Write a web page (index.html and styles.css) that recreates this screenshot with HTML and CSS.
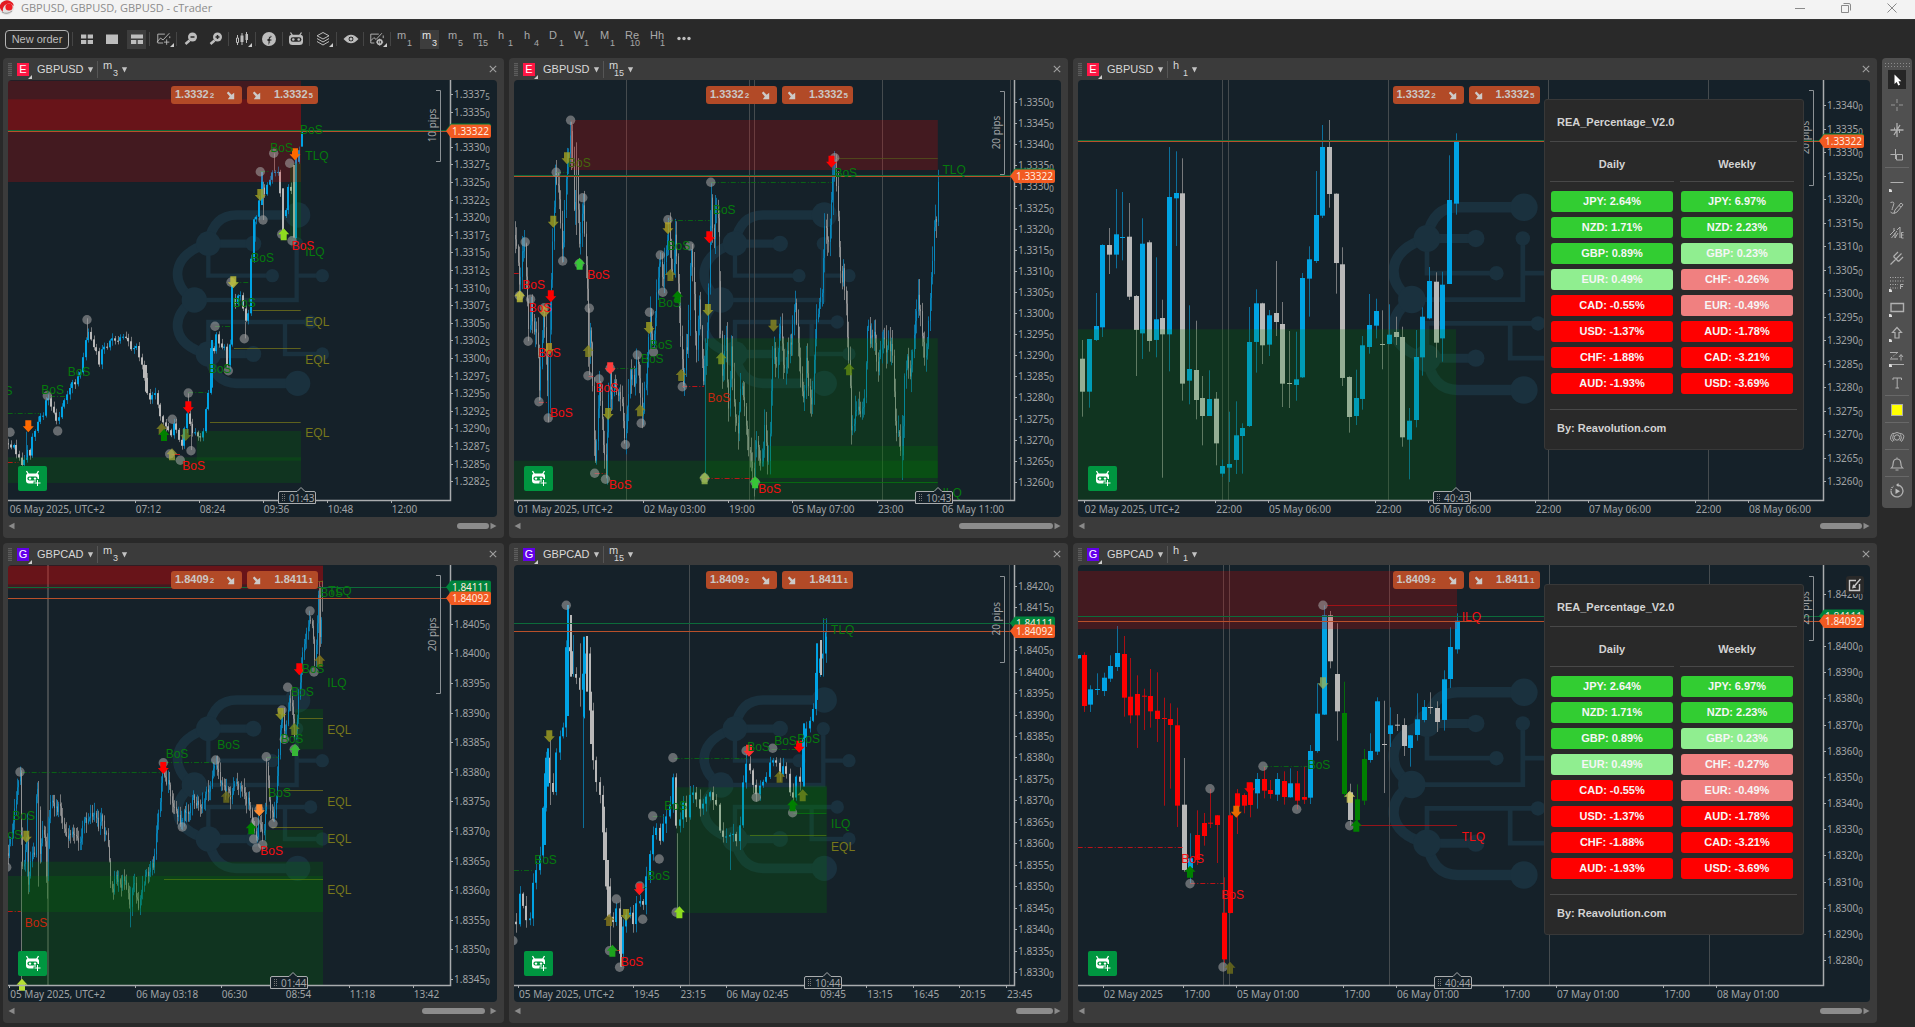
FILE: index.html
```html
<!DOCTYPE html>
<html lang="en">
<head>
<meta charset="utf-8">
<title>GBPUSD, GBPUSD, GBPUSD - cTrader</title>
<link rel="stylesheet" href="styles.css">
</head>
<body>
<svg class="defs" aria-hidden="true">
  <defs>
    <symbol id="i-corner" viewBox="0 0 4 4"><path d="M4 0V4H0Z" fill="#ccc"/></symbol>
    <symbol id="i-down" viewBox="0 0 8 8"><path d="M1 1.500H7L4 7.500Z" fill="#c4c4c4"/></symbol>
    <symbol id="i-close" viewBox="0 0 8 8"><path d="M.8.8 7.2 7.2M7.2.8.8 7.2" stroke="#a0a0a0" stroke-width="1.1" fill="none"/></symbol>
    <symbol id="i-se" viewBox="0 0 9 9"><path d="M.8 2 2.400.6 5.600 3.800 8.200 1.800V8.200H1.800L3.800 5.400Z" fill="#cdc9c7"/></symbol>
    <symbol id="i-left" viewBox="0 0 7 8"><path d="M6.500.8V7.200L.5 4Z" fill="#8a8a8a"/></symbol>
    <symbol id="i-right" viewBox="0 0 7 8"><path d="M.5.8V7.200L6.500 4Z" fill="#8a8a8a"/></symbol>
    <symbol id="i-robot" viewBox="0 0 18 18">
      <path d="M2.500 1 4.500 4.500M14.500 1 12.500 4.500" stroke="#fff" stroke-width="1.300"/>
      <path d="M4.500 3.500H12.500Q15 3.500 15 6V9H13V13.500H5Q2 13.500 2 10.500V6Q2 3.500 4.500 3.500Z" fill="#fff"/>
      <rect x="3.400" y="6.600" width="10.200" height="4" rx="2" fill="#009640"/>
      <circle cx="6" cy="8.600" r="1.200" fill="#fff"/><circle cx="11" cy="8.600" r="1.200" fill="#fff"/>
      <path d="M13.500 9V17M9.500 13H17.500" stroke="#009640" stroke-width="3"/>
      <path d="M13.500 10V16M10.500 13H16.500" stroke="#fff"/>
    </symbol>
    <symbol id="i-brain" viewBox="0 0 480 600" overflow="visible">
      <g fill="none" stroke="#1a313e">
        <g stroke-width="29"><path d="M373 48H190C140 48 115 80 105 130M105 134C-10 165-10 260 63 303C-10 345-10 440 105 465C115 520 140 553 190 553H373"/></g>
        <path d="M105 134H240M105 465H240" stroke-width="25"/>
        <path d="M105 150V230H297M63 303H370V134M370 230H447M105 450V369H412M335 369V465H447" stroke-width="13"/>
      </g>
      <g fill="#1a313e"><circle cx="373" cy="48" r="38"/><circle cx="105" cy="134" r="37"/><circle cx="240" cy="134" r="24"/><circle cx="370" cy="134" r="20"/><circle cx="297" cy="230" r="20"/><circle cx="447" cy="230" r="20"/><circle cx="63" cy="303" r="38"/><circle cx="412" cy="369" r="20"/><circle cx="447" cy="465" r="20"/><circle cx="105" cy="465" r="38"/><circle cx="240" cy="465" r="24"/><circle cx="373" cy="553" r="38"/></g>
    </symbol>
  </defs>
</svg>

<header class="titlebar">
  <svg class="logo" viewBox="0 0 15 15"><circle cx="6.500" cy="7.500" r="7.500" fill="#e2e2e2"/><path d="M0 5A7.500 7.500 0 0 1 10 1Q14 3 13.500 6Q10 2 6 4.500T3 12Q-1 9 0 5Z" fill="#e31b23"/><circle cx="9" cy="7" r="3.600" fill="#f01c24"/><path d="M2 12Q7 15 12 11" stroke="#9a9a9a" fill="none"/></svg>
  <h1 class="title">GBPUSD, GBPUSD, GBPUSD - cTrader</h1>
  <div class="window-buttons">
    <button aria-label="Minimize"><svg viewBox="0 0 12 12"><path d="M1 6.500H11" /></svg></button>
    <button aria-label="Restore"><svg viewBox="0 0 12 12"><path d="M1.500 3.500H8.500V10.500H1.500ZM3.500 1.500H9Q10.500 1.500 10.500 3V8.500"/></svg></button>
    <button aria-label="Close"><svg viewBox="0 0 12 12"><path d="M1.500 1.500 10.500 10.500M10.500 1.500 1.500 10.500"/></svg></button>
  </div>
</header>

<nav class="toolbar" aria-label="Chart toolbar">
  <button class="new-order">New order</button>
  <i class="sep"></i>
  <button class="tool" aria-label="Tile"><svg viewBox="0 0 16 16"><path d="M2 3.500H7.300V7.500H2ZM8.700 3.500H14V7.500H8.700ZM2 9H7.300V13H2ZM8.700 9H14V13H8.700Z" class="f"/></svg></button>
  <button class="tool" aria-label="Single"><svg viewBox="0 0 16 16"><path d="M2 3.500H14V13H2Z" class="f"/></svg></button>
  <button class="tool active" aria-label="Multi"><svg viewBox="0 0 16 16"><path d="M2 3.500H14V7.500H2ZM2 9H7.300V13H2ZM8.700 9H14V13H8.700Z" class="f"/></svg></button>
  <i class="sep"></i>
  <button class="tool" aria-label="Add indicator"><svg viewBox="0 0 18 16"><path d="M10 2.500H2V12.500H8M1 11.500 5 7 8 9 15 1.500M15.500 5V7M12 8.500V14.500M9 11.500H15"/></svg><svg class="corner"><use href="#i-corner"/></svg></button>
  <i class="sep"></i>
  <button class="tool" aria-label="Zoom out"><svg viewBox="0 0 16 16"><circle cx="9.500" cy="6" r="4.500" class="f"/><path d="M6.500 9.500 2.500 13" stroke-width="2.500"/><path d="M7.500 6H11.500" stroke="#292929" stroke-width="1.500"/></svg></button>
  <button class="tool" aria-label="Zoom in"><svg viewBox="0 0 16 16"><circle cx="9.500" cy="6" r="4.500" class="f"/><path d="M6.500 9.500 2.500 13" stroke-width="2.500"/><path d="M7.500 6H11.500M9.500 4V8" stroke="#292929" stroke-width="1.500"/></svg></button>
  <i class="sep"></i>
  <button class="tool solo" aria-label="Chart type"><svg viewBox="0 0 16 16"><path d="M3.500 4V14M8 2V14M12.500 1V12"/><path d="M6.500 4.500H9.500V11H6.500ZM11.500 3H14V9H11.500Z" class="f"/><path d="M2.500 7H4.500V11.500H2.500Z" fill="#292929"/></svg><svg class="corner"><use href="#i-corner"/></svg></button>
  <i class="sep"></i>
  <button class="tool solo" aria-label="Fair price"><svg viewBox="0 0 16 16"><circle cx="8" cy="8" r="7" class="f"/><path d="M7 15V10H5.500V8H7Q7 4.500 11 4.500V6.500Q9 6.500 9.200 8H11V10H9.200V12Z" fill="#292929"/></svg></button>
  <i class="sep"></i>
  <button class="tool solo" aria-label="cBots"><svg viewBox="0 0 16 16"><path d="M2.500 1.500 4.500 4.500M13.500 1.500 11.500 4.500" stroke-width="1.300"/><path d="M4 3.800H12Q15 3.800 15 6.500V10.500Q15 14 11.500 14H4.500Q1 14 1 10.500V6.500Q1 3.800 4 3.800Z" class="f"/><rect x="2.600" y="6.300" width="10.800" height="4.400" rx="2.200" fill="#292929" stroke="none"/><circle cx="5.300" cy="8.500" r="1.300" class="f"/><circle cx="10.700" cy="8.500" r="1.300" class="f"/></svg></button>
  <i class="sep"></i>
  <button class="tool solo" aria-label="Layers"><svg viewBox="0 0 16 16"><path d="M8 1.500 14 4.800 8 8 2 4.800ZM2 7.500 8 11 14 7.500M2 10.500 8 14 14 10.500"/></svg><svg class="corner"><use href="#i-corner"/></svg></button>
  <i class="sep"></i>
  <button class="tool" aria-label="Visibility"><svg viewBox="0 0 16 16"><path d="M.5 8Q8-.5 15.500 8Q8 16.500 .5 8Z" class="f"/><circle cx="8" cy="8" r="3" fill="#292929"/><circle cx="8" cy="8" r="1.500" class="f"/></svg></button>
  <i class="sep"></i>
  <button class="tool solo" aria-label="Indicator settings"><svg viewBox="0 0 18 16"><path d="M11 2.500H2V12.500H6M2 10 5.500 6.500 8 8.500 14.500 1.500M16 4V7"/><circle cx="12" cy="11.500" r="2.600" stroke-width="1.800"/><path d="M12 7.500V15.500M8 11.500H10M14 11.500H16" /></svg><svg class="corner"><use href="#i-corner"/></svg></button>
  <i class="sep"></i>
  <button class="tf"><span>m</span><sub>1</sub></button>
  <button class="tf active"><span>m</span><sub>3</sub></button>
  <button class="tf"><span>m</span><sub>5</sub></button>
  <button class="tf"><span>m</span><sub>15</sub></button>
  <button class="tf"><span>h</span><sub>1</sub></button>
  <button class="tf"><span>h</span><sub>4</sub></button>
  <button class="tf"><span>D</span><sub>1</sub></button>
  <button class="tf"><span>W</span><sub>1</sub></button>
  <button class="tf"><span>M</span><sub>1</sub></button>
  <button class="tf"><span>Re</span><sub>10</sub></button>
  <button class="tf"><span>Hh</span><sub>1</sub></button>
  <button class="tool" aria-label="More"><svg viewBox="0 0 16 16"><circle cx="3" cy="7.500" r="1.700" class="f"/><circle cx="8" cy="7.500" r="1.700" class="f"/><circle cx="13" cy="7.500" r="1.700" class="f"/></svg></button>
</nav>

<div class="workspace">
  <main class="charts" id="charts"></main>
  <aside class="tools" aria-label="Drawing tools">
    <i class="grip-wide"></i>
    <button class="active" aria-label="Pointer"><svg viewBox="0 0 16 16"><path d="M5.500 2.500V12L7.700 10 9.300 13.500 11 12.700 9.500 9.300H12.300Z" fill="#fff" stroke="none"/></svg></button>
    <button aria-label="Crosshair"><svg viewBox="0 0 16 16"><path d="M8 2V6M8 10V14M2 8H6M10 8H14" stroke="#969696"/></svg></button>
    <button aria-label="Crosshair snap"><svg viewBox="0 0 16 16"><path d="M8 1V15M1.500 8H14.500M11 3 5 13" stroke-width="1.300"/><path d="M5.500 5.500V8M10.500 7V11"/></svg></button>
    <button aria-label="Measure"><svg viewBox="0 0 16 16"><path d="M6.500 2V12M1.500 7.500H7M7.500 7.500H13.500V13H7.500Z"/></svg></button>
    <i class="rule"></i>
    <button aria-label="Line"><svg viewBox="0 0 16 16"><path d="M1.500 7.500H14.500"/></svg><i class="dot"></i></button>
    <button aria-label="Pencil"><svg viewBox="0 0 16 16"><path d="M1.500 2.500Q6 1 4.500 5T3 10M5 13.500 6 10 12 3 14 4.800 8 12ZM12 7 10 5.500M1.500 12Q3 14 5 13"/></svg></button>
    <button aria-label="Elliott waves"><svg viewBox="0 0 16 16"><path d="M1 10 6 5M2.500 13 8 6M6 13 9 8M8 5 11 2V13M14.500 7.500H12.500V13H14.500M12.500 10H14.500M5 3V6M6 13V8"/></svg></button>
    <button aria-label="Pitchfork"><svg viewBox="0 0 16 16"><path d="M1.500 14.500 7 9M4.500 6.500 9.500 11.500M4.500 6.500 9 2M7 9 12.500 3.500M9.500 11.500 14 7" stroke-width="1.200"/></svg></button>
    <button aria-label="Fibonacci"><svg viewBox="0 0 16 16"><path d="M1 2.500H15M1 6H15M1 9.500H9M1 13H9" stroke-dasharray="1 1.500"/><path d="M11.500 14V9.500H14.500M11.500 11.500H14"/></svg><i class="dot"></i></button>
    <button aria-label="Rectangle"><svg viewBox="0 0 16 16"><path d="M2 3.500H14.500V11.500H2Z" stroke-width="1.400"/></svg><i class="dot"></i></button>
    <button aria-label="Arrow"><svg viewBox="0 0 16 16"><path d="M8 2.500 12.500 7.500H10V13H6V7.500H3.500Z" stroke-width="1.200"/></svg><i class="dot"></i></button>
    <button aria-label="Position"><svg viewBox="0 0 16 16"><path d="M1 2.500H9M1 9H9M1 14.500H15M12 10.500V5M10 7 12 4.500 14 7"/><path d="M2 8 8 3" stroke-dasharray="1.500 1.500"/></svg><i class="dot"></i></button>
    <button aria-label="Text"><svg viewBox="0 0 16 16"><path d="M4 5V3H12.500V5M8.200 3V13M6.500 13H10"/></svg></button>
    <i class="rule"></i>
    <button class="short" aria-label="Colour"><i class="swatch"></i></button>
    <i class="rule"></i>
    <button class="short" aria-label="Snapshot"><svg viewBox="0 0 16 16"><circle cx="8" cy="8.500" r="2.700"/><path d="M4 12.500Q.5 11 2 7T5 4.500Q8 2.500 11 4.500Q16 5 14.500 9T12 12.500M4.500 5.500Q2.500 9 5 12M11.500 5.500Q13.500 9 11 12"/></svg></button>
    <i class="rule"></i>
    <button class="short" aria-label="Alert"><svg viewBox="0 0 16 16"><path d="M2.500 12H13.500Q11.800 10.500 11.800 7Q11.500 3 8 3T4.200 7Q4.200 10.500 2.500 12ZM8 3V1.500M6.500 14H9.500" stroke-width="1.200"/></svg></button>
    <i class="rule"></i>
    <button class="short" aria-label="Replay"><svg viewBox="0 0 16 16"><path d="M9 2A6 6 0 1 1 4.500 3" stroke-width="1.300"/><path d="M4 3A6 6 0 0 0 2 8" stroke="#505050" stroke-width="2" stroke-dasharray="1 1.500"/><path d="M6.500 5.500V11L11 8.200Z" class="f"/><path d="M9.500 0V4L7 2Z" class="f"/></svg></button>
  </aside>
</div>
<script src="charts.js"></script>
</body>
</html>
```
FILE: styles.css
```css
* { box-sizing: border-box; }

html, body { height: 100%; }

body {
  margin: 0;
  display: flex;
  flex-direction: column;
  background: #292929;
  color: #d8d8d8;
  font: 11px/14px "Liberation Sans", Arial, sans-serif;
  overflow: hidden;
}

button, select {
  margin: 0;
  padding: 0;
  border: 0;
  background: none;
  color: inherit;
  font: inherit;
}

.defs { position: absolute; width: 0; height: 0; }

/* window title */
.titlebar {
  flex: none;
  display: flex;
  align-items: center;
  height: 19px;
  padding-bottom: 4px;
  background: #f3f3f3;
}
.logo { width: 15px; height: 15px; margin-right: 6px; }
.title {
  margin: 0;
  flex: 1;
  color: #8c8c8c;
  font: 400 11px/14px "Open Sans", "Noto Sans", sans-serif;
}
.window-buttons { display: flex; }
.window-buttons button { width: 46px; height: 12px; display: grid; place-items: center; }
.window-buttons svg { width: 12px; height: 12px; fill: none; stroke: #8a8a8a; }

/* main toolbar */
.toolbar {
  flex: none;
  display: flex;
  align-items: center;
  height: 39px;
  padding: 0 5px 0 5px;
  border-top: 1px solid #333;
}
.new-order {
  width: 64px;
  height: 19px;
  margin-right: 3px;
  border: 1px solid #b4b4b4;
  border-radius: 4px;
  color: #bdbdbd;
}
.sep { width: 2px; height: 14px; border-left: 1px solid #454545; }
.tool, .tf {
  position: relative;
  width: 25px;
  height: 19px;
  display: grid;
  place-content: center;
}
.tool.solo { width: 24px; }
.solo + .sep { margin-left: 1px; }
.tool > svg:first-child { width: 16px; height: 16px; fill: none; stroke: #bdbdbd; }
.f { fill: #bdbdbd; stroke: none; }
.active { background: #3d3d3d content-box; border-radius: 3px; }
.toolbar .active { padding: 0 3px; }
.corner { position: absolute; right: 2px; bottom: 2px; width: 4px; height: 4px; }
.tf, .timeframe > span:first-child {
  color: #a9a9a9;
  display: grid;
  grid-template: 8px 8px / 15px;
}
.tf { place-content: center; }
.tf:nth-of-type(3n) { margin-right: 1px; }
.tf span, .tf sub, .name, .timeframe sub { line-height: 8px; text-align: left; vertical-align: baseline; }
.tf sub, .timeframe sub { font-size: 9px; text-align: right; }
.tf.active { color: #e6e6e6; }

/* chart grid */
.workspace {
  flex: 1;
  min-height: 0;
  display: flex;
  align-items: flex-start;
  gap: 5px;
  padding: 0 3px 4px 3px;
}
.charts {
  flex: 1;
  min-width: 0;
  height: 100%;
  display: grid;
  grid-template-columns: minmax(0, 501fr) minmax(0, 559fr) minmax(0, 804fr);
  grid-template-rows: repeat(2, minmax(0, 1fr));
  gap: 5px;
}
.panel {
  display: flex;
  flex-direction: column;
  padding: 0 7px 0 5px;
  border-radius: 4px;
  background: #3b3b3b;
}
.panel-head {
  flex: none;
  display: flex;
  align-items: center;
  height: 22px;
}
.grip {
  width: 4px;
  height: 13px;
  background: repeating-linear-gradient(#5c5c5c 0 1px, #444 1px 2px);
}
.badge {
  position: relative;
  width: 12px;
  height: 13px;
  margin: 0 8px 0 5px;
  background: #ff1744;
  color: #fff;
  line-height: 13px;
  text-align: center;
}
.badge.violet { background: #6200ea; }
.badge .corner { right: -3px; bottom: -3px; }
.symbol { display: flex; align-items: center; gap: 3px; padding-right: 3px; border-right: 1px solid #555; height: 17px; }
.symbol select { appearance: none; color: #d8d8d8; height: 14px; line-height: 14px; }
.arrow { width: 7px; height: 7px; }
.timeframe { display: flex; align-items: center; gap: 3px; margin: 0 auto 0 5px; }
.timeframe > span:first-child { color: #d8d8d8; }
.close { width: 8px; height: 14px; display: grid; place-items: center; }
.close svg { width: 8px; height: 8px; }

.chart {
  position: relative;
  flex: 1;
  min-height: 0;
  overflow: hidden;
  border-radius: 4px;
  background: #152129;
}
.plot { display: block; width: 100%; height: 100%; }
.plot text { font-family: "Liberation Sans", Arial, sans-serif; font-size: 12px; }
.plot .axis { font-family: "Noto Sans", sans-serif; font-size: 10px; fill: #a0a3a5; }
.plot .axis .pip { font-size: 8px; }
.plot .tag { font-family: "Noto Sans", sans-serif; font-size: 10px; fill: #ffe9df; }

.scroll { flex: none; display: flex; align-items: center; height: 21px; padding-bottom: 3px; }
.scroll > svg { width: 7px; height: 8px; }
.thumb { height: 6px; margin-left: auto; border-radius: 3px; background: #8c8c8c; }

/* items floating over a chart */
.trade {
  position: absolute;
  top: 6px;
  left: 0;
  right: 16px;
  display: flex;
  justify-content: center;
  gap: 5px;
}
.trade button {
  display: flex;
  align-items: center;
  justify-content: space-between;
  width: 71px;
  height: 18px;
  padding: 0 7px 0 4px;
  border-radius: 3px;
  background: #b24a27;
  color: #cbc6c4;
  font-weight: 700;
}
.trade button + button { padding: 0 5px; }
.trade small { font-size: 8px; margin-left: 1px; }
.trade svg { width: 9px; height: 9px; }
.add-bot {
  position: absolute;
  left: 10px;
  bottom: 26px;
  width: 29px;
  height: 25px;
  display: grid;
  place-items: center;
  border-radius: 2px;
  background: #009640;
}
.add-bot svg { width: 18px; height: 18px; }
.edit {
  position: absolute;
  top: 11px;
  right: 6px;
  width: 18px;
  height: 18px;
  display: grid;
  place-items: center;
  border-radius: 3px;
  background: #292929;
}
.edit svg { width: 14px; height: 14px; fill: none; stroke: #c8c8c8; stroke-width: 1.4px; }

.strength {
  position: absolute;
  top: 19px;
  right: 66px;
  width: 260px;
  padding: 13px 6px 12px 5px;
  border: 1px solid #383838;
  border-radius: 3px;
  background: #292929;
  color: #d3d3d3;
  font-weight: 700;
}
.strength h2 { margin: 0; padding: 2px 7px 12px; border-bottom: 1px solid #484848; font: inherit; line-height: 14px; }
.strength p { margin: 0; padding: 11px 7px 2px; border-top: 1px solid #484848; }
.strength table { border-collapse: collapse; width: 244px; margin-bottom: 13px; }
.strength col:first-child { width: 130px; }
.strength th { height: 40px; padding: 3px 6px 0 0; vertical-align: middle; position: relative; }
.strength th + th, .strength td + td { padding-right: 0; }
.strength th::after {
  content: "";
  position: absolute;
  left: 0;
  right: 6px;
  bottom: 0;
  border-bottom: 1px solid #484848;
}
.strength th + th::after { right: 0; }
.strength td { padding: 0 6px 0 0; height: 26px; }
.strength tbody::before { content: ""; display: block; height: 6px; }
.chip { display: block; height: 21px; margin: 0 1px; border-radius: 3px; color: #f6f6f6; line-height: 21px; text-align: center; }
.up2 { background: #32cd32; }
.up1 { background: #90ee90; }
.down1 { background: #f08080; }
.down2 { background: #ff0000; }

/* drawing tools */
.tools {
  flex: none;
  display: flex;
  flex-direction: column;
  align-items: center;
  width: 30px;
  padding: 4px 0 5px;
  border-radius: 4px;
  background: #505050;
}
.grip-wide { width: 26px; height: 5px; background: radial-gradient(circle, #8a8a8a 1px, transparent 1px) 0 0 / 3px 3px; }
.tools button { position: relative; width: 26px; height: 25px; display: grid; place-items: center; }
.tools button.active { padding: 3px 4px; background-color: #262626; }
.tools button.short { height: 24px; }
.tools svg { width: 16px; height: 16px; fill: none; stroke: #b0b0b0; }
.rule { width: 24px; height: 3px; border-top: 1px solid #686868; }
.dot { position: absolute; left: 5px; bottom: 3px; width: 3px; height: 3px; background: #ddd; border-radius: 0 2px 0 0; }
.swatch { width: 12px; height: 12px; border: 1px solid #aaa; background: #ff0; }
```
FILE: charts.js
```js
// Chart specs. Plot data is kept in plot units: sx units per pixel across, 3 per pixel down.
const BLUE = ['#00a3e4', '#0c6f9c'], WHITE = ['#b9b9b9', '#77797b'], RED = ['#ff0000', '#a80f14'], GREEN = ['#008000', '#066b0c'];
const PAL = { b: BLUE, w: WHITE, r: RED, g: GREEN };
const G = '#067a0d', R = '#f40f12', O = '#77771a';

const hourUsd = `37w855,911,1010,1085 57b852,852,1010,1058 77b714,813,855,858 97b568,570,817,846 117w519,570,599,657 137b402,538,599,640 157b411,546,548,616 177w444,545,725,735 197w720,723,825,963 217b490,566,835,912 237w556,562,858,890 257b607,793,855,907 277w734,789,838,1268 297b276,426,838,949 317b289,414,430,573 337w310,415,986,1037 357b751,942,977,1048 377w797,945,1035,1093 397w963,1029,1083,1171 417b946,1032,1083,1083 437w1011,1031,1165,1231 457b1214,1233,1256,1266 477b1070,1227,1238,1281 497b1039,1141,1215,1257 517b1105,1119,1143,1256 537b756,861,1113,1116 557b703,745,861,953 577w743,745,871,927 597b765,781,869,903 617w618,774,801,843 637w741,807,986,1056 657w828,984,987,1059 677b830,973,990,1037 697b654,669,967,969 717b574,613,671,785 737b348,480,618,624 757b210,276,482,489 777w195,276,417,458 797w415,416,624,716 817w577,628,969,993 837w964,966,1086,1133 857b944,1029,1083,1110 877b843,871,1032,1064 897b717,810,876,896 917b731,768,812,850 937w766,867,869,943 957b748,839,867,868 977w785,831,846,870 997w815,846,1147,1175 1017b1059,1097,1154,1273 1037b825,906,1095,1117 1057b757,785,907,962 1077b636,678,790,793 1097w652,680,863,908 1117b650,689,850,920 1137b301,435,687,687 1157b235,259,446,479`;
const hourCad = `25b345,345,355,356 41r337,345,498,516 61b436,448,494,516 81b400,447,449,465 101b398,413,453,468 121b346,378,416,426 141b258,339,381,393 161r288,342,473,530 181r354,470,526,550 201r406,462,526,624 221r446,467,470,570 241r387,468,514,563 261r397,512,537,606 281r473,534,537,797 301r490,537,555,746 321r503,556,797,861 341w654,794,990,995 361b880,955,985,1030 381r811,885,960,975 401r819,849,888,917 421r747,848,851,864 441r825,826,855,969 461r1012,1118,1258,1270 481r818,826,1119,1120 501r747,760,800,882 521r760,765,797,820 541r727,730,795,832 561b699,717,760,806 581r680,717,752,775 601r720,750,762,776 621b699,717,764,783 641r694,723,771,794 661b685,730,772,773 681r693,730,782,808 701r680,771,779,792 721b615,633,773,792 741b430,521,633,638 761b196,226,524,525 781w213,226,364,385 801w250,402,514,602 821g425,519,762,772 841w731,757,840,857 861g733,778,840,845 881g627,657,782,795 901b580,633,660,668 921b472,484,635,645 941w482,612,614,759 961b502,556,582,621 981w522,554,557,573 1001w535,555,618,648 1021b585,586,624,680 1041b460,538,585,602 1061b480,501,540,547 1081w457,501,504,522 1101w484,504,546,576 1121b391,418,540,572 1141b262,321,417,444 1161b220,242,328,341`;

const specs = [
{ sym: 'GBPUSD', badge: 'E', tf: ['m', 3], sx: 3, ox: 8, thumb: [32, 1], price: ['1.3332', 2, 5],
  brain: [520, 432, 1], step: 8, body: 2, noise: 12,
  path: [25,1165,33,1180,41,1170,49,1195,57,1210,65,1235,75,1210,80,1185,90,1200,97,1150,105,1130,113,1095,121,1085,129,1080,137,1035,145,1035,153,1060,161,1070,173,1115,180,1070,190,1045,200,1020,215,985,225,985,235,960,245,945,255,860,262,835,270,835,280,880,290,895,298,935,305,880,318,875,330,860,340,850,350,860,360,850,375,850,385,860,395,895,405,870,412,885,420,925,428,935,436,990,445,1030,455,1025,463,1000,470,1030,478,1080,486,1095,494,1110,502,1105,510,1160,518,1100,530,1125,540,1170,548,1180,556,1080,566,1080,574,1140,582,1130,590,1150,600,1145,610,1130,620,1040,628,1000,632,880,640,900,648,840,656,860,664,885,672,870,680,930,688,900,694,720,702,750,712,730,720,710,728,760,738,800,746,770,752,640,758,490,766,500,774,470,782,390,790,420,798,400,806,380,814,355,822,360,830,345,838,370,846,480,854,490,862,420,870,340,878,520,886,330,894,310,902,240],
  bars: [[261,790,850,'w',1],[821,295,350,'w',1],[565,1015,1075,'w',1],[878,330,548,'w',2],[886,300,550,'b',2],[847,400,530,'w',2],[694,690,868,'b',2],[632,855,998,'b',2],[902,225,275,'b',2],[734,800,850,'w',1],[573,1100,1185,'w',1],[766,500,560,'b',1],[434,930,1010,'w',2],[78,1130,1210,'b',1],[782,350,450,'b',2],[790,380,495,'w',1]],
  zones: [['r',23,77,903,381],['r',23,133,903,227],['g',870,325,903,555],['g',23,1207,903,1284],['g',590,1128,903,1217]],
  lines: [[758,766,902,O],[702,880,902,O],[630,1100,902,O],[23,1220,55,R,1],[23,1075,118,G,1],[150,1022,200,G,1],[565,1012,620,G,1],[645,814,692,G,1],[700,680,748,G,1],[781,349,808,G,1],[515,1196,540,R]],
  bid: 229, ask: 224,
  circles: [[30,1132],[142,1022],[173,1128],[261,794],[517,1093],[509,1197],[541,1216],[565,1014],[573,1187],[645,814],[685,947],[693,682],[733,851],[781,350],[789,495],[821,295],[845,538],[869,325],[876,557]],
  arrows: [[85,1114,-1,'#ff6a00'],[565,1057,-1,'#f00'],[485,1122,1,'#9a9a20aa'],[492,1140,1,'#008000'],[516,1198,1,'#b5b53caa'],[557,1140,-1,'#7d9a20aa'],[700,682,-1,'#c5c53acc'],[781,420,-1,'#a3a320cc'],[851,538,1,'#8edb1f'],[885,298,-1,'#ff6a00']],
  labels: [[-31,1009,'BoS',G],[124,1004,'BoS',G],[203,951,'BoS',G],[547,1232,'BoS',R],[626,941,'BoS',G],[699,744,'BoS',G],[754,610,'BoS',G],[811,280,'BoS',G],[900,224,'BoS',G],[875,572,'BoS',R],[916,303,'TLQ',G],[916,592,'ILQ',G],[916,801,'EQL',O],[916,915,'EQL',O],[916,1133,'EQL',O]],
  y: [1.33375, -.00025, 117, 52.8, 23, [2]], pips: ['10 pips',106,317],
  x: [[29,'06 May 2025, UTC+2',0],[407,'07:12'],[599,'08:24'],[791,'09:36'],[983,'10:48'],[1175,'12:00']], now: [902,'01:43',-4] },

{ sym: 'GBPUSD', badge: 'E', tf: ['m', 15], sx: 2.775, ox: 9, thumb: [94, 1], price: ['1.3332', 2, 5],
  brain: [541, 432, 1], vlines: [339,679,694,1049,1405], step: 3.7, body: 1, noise: 45, dim: 1,
  path: [28,540,36,630,41,710,46,610,55,570,60,730,66,850,71,740,80,830,90,860,95,1030,100,900,107,770,113,880,120,1080,126,720,133,540,137,380,142,360,150,450,160,610,165,440,172,340,182,210,186,300,192,520,198,340,206,600,212,500,216,440,222,560,228,700,233,950,236,780,243,1000,249,1240,255,1120,261,980,268,1100,279,1260,284,1120,290,960,296,1040,303,990,312,1040,320,1020,328,1110,334,1150,340,1030,348,950,358,990,367,910,374,1010,379,1100,386,1020,392,960,398,860,402,780,410,880,418,740,425,650,431,610,438,700,445,600,452,505,458,600,465,650,472,560,480,700,488,860,494,990,500,900,508,850,514,580,520,640,530,900,538,720,544,880,551,980,556,880,562,800,566,640,571,400,578,600,584,420,590,460,596,800,602,1000,612,850,620,1060,628,880,636,1080,645,1130,655,1000,664,1060,672,1160,684,1240,690,1260,698,1150,706,1220,714,1230,720,1120,728,1220,734,1180,740,960,746,880,750,960,764,820,774,940,785,900,795,860,804,710,812,840,820,980,828,1050,835,900,842,980,850,1040,858,900,866,780,872,760,880,700,888,480,895,580,902,500,910,340,916,340,922,440,932,680,938,640,946,760,954,920,960,1120,968,1100,976,1050,985,1060,998,1040,1004,800,1012,860,1022,820,1034,940,1044,850,1054,870,1062,880,1074,860,1084,1140,1092,1120,1102,1230,1108,980,1114,900,1122,960,1132,860,1146,730,1154,800,1162,900,1168,920,1176,780,1184,640,1192,470,1197,530,1201,360],
  bars: [[554,850,1262,'b',1],[183,200,345,'w',1],[198,262,540,'w',1],[571,385,570,'b',1],[120,900,1085,'b',1],[910,320,480,'b',1],[694,1160,1275,'b',1],[595,545,850,'w',1],[233,760,960,'w',1],[1101,1080,1275,'b',1],[125,740,1070,'b',1]],
  zones: [['r',183,195,1201,345],['g',554,850,1201,1269],['g',25,1217,1201,1337],['g',734,1173,1201,1269]],
  lines: [[920,308,1201,'#55551a'],[25,655,38,R,1],[142,352,172,G,1],[452,494,568,G,1],[571,382,908,G,1],[292,940,368,G,1],[492,994,552,R,1],[554,1268,692,R,1],[249,1254,279,R,1],[94,1040,120,R,1],[694,1282,1201,G],[232,962,245,R]],
  bid: 365, ask: 362,
  circles: [[56,561],[40,722],[71,733],[64,859],[94,1040],[120,1089],[142,352],[160,618],[182,196],[216,428],[206,626],[234,760],[109,758],[230,962],[261,972],[249,1255],[279,1273],[292,940],[334,1169],[367,900],[378,1105],[401,772],[412,891],[431,600],[438,712],[452,494],[513,573],[492,995],[571,382],[554,1269],[694,1282],[915,308]],
  arrows: [[172,310,-1,'#a3a320cc'],[134,500,-1,'#a3a320cc'],[41,724,1,'#c5c53acc'],[127,724,-1,'#f00'],[109,770,-1,'#b5a53acc'],[122,882,-1,'#b59a20cc'],[207,626,1,'#37c637'],[231,888,1,'#8a8a20cc'],[292,940,-1,'#ff3b3b'],[286,1077,-1,'#a3a320cc'],[375,1066,1,'#8a8a20cc'],[400,819,-1,'#a3a320cc'],[452,520,-1,'#b3a320cc'],[459,660,1,'#8a8a20cc'],[479,725,1,'#008000'],[489,960,1,'#8a8a20cc'],[567,547,-1,'#f00'],[563,765,-1,'#a3a320cc'],[554,1270,1,'#9fbf4fcc'],[600,910,1,'#7d9a20cc'],[694,1282,1,'#37c637'],[745,812,-1,'#8a8a20cc'],[906,320,-1,'#f00'],[955,943,1,'#5f8a10cc']],
  labels: [[175,324,'BoS','#45660d'],[228,660,'BoS',R],[48,690,'BoS',R],[66,758,'BoS',R],[92,893,'BoS',R],[125,1074,'BoS',R],[251,998,'BoS',R],[289,1289,'BoS',R],[377,912,'BoS',G],[402,871,'BoS',G],[425,744,'BoS',G],[451,572,'BoS',G],[577,466,'BoS',G],[562,1030,'BoS','#c6270f'],[703,1303,'BoS',R],[914,353,'BoS',G],[1214,344,'TLQ',G],[1214,1315,'ILQ',G]],
  y: [1.335, -.0005, 141, 63.3, 19, []], pips: ['20 pips',107,358],
  x: [[35,'01 May 2025, UTC+2'],[385,'02 May 03:00'],[622,'19:00'],[798,'05 May 07:00'],[1035,'23:00'],[1213,'06 May 11:00',0]], now: [1201,'10:43',-4] },

{ sym: 'GBPUSD', badge: 'E', tf: ['h', 1], sx: 3, ox: 8, thumb: [42, 1], price: ['1.3332', 2, 5], wide: 1, chf: '-0.26',
  brain: [957, 405, 1.085], vlines: [458,476,957,1436,1916], candles: hourUsd,
  zones: [['g',23,823,1158,1337]], lines: [], bid: 259, ask: 254, circles: [], arrows: [], labels: [],
  y: [1.334, -.0005, 150, 70.56, 17, []], pips: ['20 pips',106,389],
  x: [[44,'02 May 2025, UTC+2'],[439,'22:00'],[597,'05 May 06:00'],[918,'22:00'],[1077,'06 May 06:00'],[1397,'22:00'],[1557,'07 May 06:00'],[1877,'22:00'],[2037,'08 May 06:00']], now: [1157,'40:43',-4] },

{ sym: 'GBPCAD', badge: 'G', tf: ['m', 3], sx: 3, ox: 8, thumb: [63, 5], price: ['1.8409', 2, 1, '1.8411'],
  brain: [520, 432, 1], vlines: [143], step: 4, body: 1, noise: 26, dim: 1,
  path: [23,940,30,900,38,860,46,790,54,720,60,705,64,960,72,980,78,870,84,1080,90,960,97,940,103,950,108,730,114,760,118,960,126,870,134,890,140,1030,144,900,148,800,158,790,168,805,178,800,186,840,192,880,202,900,212,885,222,890,232,890,240,905,246,860,254,830,262,840,270,820,278,830,286,825,296,860,304,835,312,880,320,890,326,950,332,1060,340,1050,346,1010,354,1020,362,1040,370,1010,378,1040,384,1060,389,1130,394,1060,402,1030,410,1080,416,1100,422,1070,430,1030,438,990,446,1000,454,970,460,980,466,900,474,830,482,740,490,690,498,720,506,740,514,790,522,800,530,820,538,840,546,850,552,815,560,830,568,810,576,770,584,790,594,780,604,810,612,780,620,750,630,740,638,700,648,680,656,710,664,730,672,750,682,750,692,770,700,750,708,730,716,750,724,740,732,770,740,780,750,800,756,860,764,880,770,910,776,840,784,860,788,900,794,860,799,680,805,760,812,820,820,840,828,760,834,650,840,570,846,520,853,590,860,540,866,460,874,490,880,560,885,610,892,510,898,430,906,330,914,290,922,270,930,235,938,290,944,370,950,280,955,160,960,330,965,170],
  bars: [[64,965,1330,'w',1],[389,1040,1162,'b',1],[115,730,1040,'w',1],[140,880,1076,'w',1],[143,830,1020,'b',1],[799,655,800,'w',1],[957,125,375,'w',1],[967,122,215,'w',1],[80,820,1010,'b',1]],
  zones: [['r',23,77,969,148],['r',23,77,969,133],['g',23,1008,969,1116],['g',65,965,969,1337],['g',885,507,969,628],['g',795,870,969,923]],
  lines: [[898,535,969,O],[850,751,969,O],[815,862,969,O],[492,1017,969,'#4f7a10'],[65,697,490,G,1],[492,667,645,G,1],[799,650,835,G,1],[23,1114,62,R,1],[955,122,969,O]],
  bid: 175, ask: 142, askTag: 142,
  circles: [[60,696],[20,982],[490,668],[547,861],[647,660],[766,845],[761,897],[770,924],[788,914],[777,809],[799,650],[819,851],[846,510],[853,598],[863,442],[883,628],[930,213],[942,396]],
  arrows: [[79,890,-1,'#a3a320cc'],[490,684,-1,'#f00'],[679,770,1,'#6f6f1acc'],[754,865,1,'#008000'],[778,811,-1,'#ff8c30'],[842,522,-1,'#a3a320cc'],[883,567,1,'#6f8a1acc'],[885,630,1,'#37b637'],[898,388,-1,'#f00'],[959,362,1,'#8a7a1acc'],[66,1334,1,'#b5e035']],
  labels: [[37,829,'BoS',G],[-2,885,'BoS',G],[497,642,'BoS',G],[652,614,'BoS',G],[74,1150,'BoS','#c6270f'],[781,933,'BoS',R],[805,758,'BoS',G],[842,597,'BoS',G],[873,456,'BoS',G],[905,388,'BoS',G],[961,158,'BoS',G],[985,154,'TLQ',G],[982,430,'ILQ',G],[982,570,'EQL',O],[982,786,'EQL',O],[982,897,'EQL',O],[982,1050,'EQL',O]],
  y: [1.8405, -.0005, 251, 88.8, 13, []], pips: ['20 pips',106,460],
  x: [[31,'05 May 2025, UTC+2',1],[409,'06 May 03:18'],[665,'06:30'],[857,'08:54'],[1049,'11:18'],[1241,'13:42']], now: [880,'01:44',-4] },

{ sym: 'GBPCAD', badge: 'G', tf: ['m', 15], sx: 2.775, ox: 9, thumb: [37, 1], price: ['1.8409', 2, 1, '1.8411'],
  brain: [541, 432, 1], vlines: [513,1400], step: 9.25, body: 2, noise: 26,
  path: [31,1145,41,1060,50,1100,60,1140,69,1140,78,1030,88,985,97,945,107,760,116,640,124,740,134,745,143,630,152,580,161,560,171,300,180,350,189,400,198,420,208,460,217,400,226,340,236,540,245,680,254,740,263,760,273,900,282,1060,291,1150,300,1140,310,1110,319,1250,328,1160,338,1130,347,1120,356,1150,366,1080,374,1070,384,1110,393,1000,402,930,411,880,421,870,430,920,439,850,448,830,458,800,467,700,476,890,485,840,494,790,504,840,513,750,522,745,532,780,541,795,550,790,560,770,569,750,578,770,588,800,597,880,606,895,615,885,625,890,634,890,643,900,652,860,661,700,671,670,680,710,689,750,698,755,708,740,717,735,726,710,735,670,744,670,754,680,763,700,772,690,782,710,790,750,800,780,809,700,818,720,827,600,837,550,846,550,855,500,864,390,874,360,883,340,892,280],
  bars: [[171,195,528,'b',2],[180,225,410,'w',2],[217,290,535,'b',2],[217,530,864,'b',1],[226,288,455,'w',2],[236,455,612,'w',2],[864,310,480,'b',2],[874,300,405,'w',2],[883,235,410,'b',1],[892,235,290,'b',1],[476,880,1115,'w',1],[291,1120,1230,'w',1],[319,1130,1280,'w',2],[273,800,960,'w',2],[282,960,1130,'w',2],[189,285,410,'b',1],[208,310,500,'w',1],[107,700,915,'b',2],[116,625,740,'b',2],[124,600,795,'w',1],[827,550,740,'b',2],[625,890,990,'b',1]],
  zones: [['g',476,742,893,1119],['g',800,737,893,820]],
  lines: [[470,653,670,G,1],[410,828,440,G,1],[25,991,78,G,1],[740,626,810,G,1],[680,885,892,'#4f7a10'],[800,818,892,G],[290,1231,318,R],[380,1040,392,G,1],[882,236,893,G]],
  bid: 275, ask: 250, askTag: 248,
  circles: [[22,1202],[170,196],[466,653],[410,828],[428,957],[309,1077],[290,1232],[318,1282],[374,1038],[382,1138],[475,1117],[669,632],[743,625],[697,772],[798,818]],
  arrows: [[123,589,-1,'#a3a320cc'],[336,1125,-1,'#a3a320cc'],[289,1140,1,'#8a7a1acc'],[298,1232,1,'#1da31d'],[373,1048,-1,'#ff1a1a'],[484,1117,1,'#8edb1f'],[677,632,-1,'#ff3030'],[816,620,-1,'#f00'],[762,710,1,'#7f7f1acc'],[798,796,1,'#008000'],[826,766,1,'#6f8a1acc']],
  labels: [[81,960,'BoS',G],[321,1266,'BoS',R],[395,1008,'BoS',G],[442,798,'BoS',G],[672,621,'BoS',G],[747,602,'BoS',G],[811,597,'BoS',G],[905,270,'TLQ',G],[905,852,'ILQ',G],[905,920,'EQL',O]],
  y: [1.842, -.0005, 137, 64.4, 19, [2]], pips: ['20 pips',107,365],
  x: [[39,'05 May 2025, UTC+2'],[358,'19:45'],[487,'23:15'],[615,'06 May 02:45'],[875,'09:45'],[1005,'13:15'],[1134,'16:45'],[1263,'20:15'],[1393,'23:45']], now: [892,'10:44',-3] },

{ sym: 'GBPCAD', badge: 'G', tf: ['h', 1], sx: 3, ox: 8, thumb: [42, 1], price: ['1.8409', 2, 1, '1.8411'], wide: 1, chf: '-0.27', edit: 1,
  brain: [957, 405, 1.085], vlines: [461,481,961,1441,1921], candles: hourCad,
  zones: [['r',23,93,1161,267]],
  lines: [[23,922,341,R,1],[361,1030,461,R,1],[581,679,712,G,1],[770,196,1161,'#c01015'],[860,856,1161,'#c01015']],
  bid: 244, ask: 229, askTag: 228,
  circles: [[759,196],[579,679],[680,808],[420,746],[360,1031],[459,1281],[839,857]],
  arrows: [[759,430,-1,'#8fb060cc'],[539,745,-1,'#f00'],[499,815,-1,'#e86a00'],[360,995,1,'#008000'],[480,1283,1,'#6f6f1acc'],[839,770,1,'#d8d060cc'],[859,857,1,'#008000']],
  labels: [[334,958,'BoS',R],[454,1066,'BoS',R],[713,675,'BoS',G],[1175,230,'ILQ',R],[1175,892,'TLQ',R]],
  y: [1.842, -.001, 161, 78.5, 15, [1]], pips: ['25 pips',107,301],
  x: [[101,'02 May 2025'],[343,'17:00'],[501,'05 May 01:00'],[823,'17:00'],[981,'06 May 01:00'],[1303,'17:00'],[1461,'07 May 01:00'],[1783,'17:00'],[1941,'08 May 01:00']], now: [1161,'40:44',-4] }
];

function drawChart(svg, s) {
  const W = svg.clientWidth, H = svg.clientHeight, ax = W - 47, ay = H - 17;
  const X = u => +(u / s.sx - s.ox).toFixed(1), Y = v => +(v / 3 - 25).toFixed(1);
  let o = '';
  const rect = (x, y, w, h, f, e = '') => { o += `<rect x="${x}" y="${y}" width="${w}" height="${Math.max(h, 1)}" fill="${f}" ${e}/>`; };
  const k = s.brain[2] / 3;
  o += `<use href="#i-brain" x="0" y="0" width="480" height="600" transform="translate(${s.brain[0] / s.sx - s.ox} ${Y(s.brain[1])}) scale(${k})"/>`;
  (s.vlines || []).forEach(u => rect(Math.round(X(u)) - 1, 0, s.sx === 3 && u === 143 ? 2 : 1, ay, '#454b4e'));

  const c = (u, hi, top, bot, lo, kind, w) => {
    const p = PAL[kind], x = Math.round(X(u));
    rect(x, Y(hi), 1, (lo - hi) / 3, p[1]);
    rect(x - Math.floor(w / 2), Y(top), w, (bot - top) / 3, p[0], s.dim ? 'opacity=".45"' : '');
  };
  if (s.candles) {
    s.candles.split(' ').forEach(t => {
      const m = t.match(/(\d+)(\w)([\d,]+)/), v = m[3].split(',').map(Number);
      c(+m[1], v[0], v[1], v[2], v[3], m[2], 5);
    });
  } else {
    const p = s.path, n = p.length;
    let i = 0, prev = p[1];
    for (let u = p[0], q = 1; u <= p[n - 2]; u += s.step, q++) {
      while (i < n - 4 && p[i + 2] < u) i += 2;
      const f = (u - p[i]) / (p[i + 2] - p[i]);
      const r = a => Math.abs(Math.sin(q * a) * 43758.5) % 1;
      const v = p[i + 1] + f * (p[i + 3] - p[i + 1]) + (r(12.9) - .5) * s.noise;
      const top = Math.min(v, prev), bot = Math.max(v, prev);
      c(u, top - 4 - r(7.3) * s.noise, top, bot, bot + 4 + r(3.7) * s.noise, v < prev ? 'b' : 'w', s.body);
      prev = v;
    }
    s.bars.forEach(b => rect(Math.round(X(b[0])), Y(b[1]), b[4], (b[2] - b[1]) / 3, b[4] > 1 ? PAL[b[3]][0] : PAL[b[3]][1]));
  }
  s.zones.forEach(z => rect(X(z[1]), Y(z[2]), X(z[3]) - X(z[1]), (z[4] - z[2]) / 3, z[0] === 'r' ? '#ff0000' : '#008000', 'opacity=".2"'));
  s.lines.forEach(l => { o += `<path d="M${X(l[0])} ${Math.round(Y(l[1])) + .5}H${X(l[2])}" stroke="${l[3]}" opacity=".75" ${l[4] ? 'stroke-dasharray="5 2 1 2"' : ''}/>`; });
  const by = Math.floor(Y(s.bid)), ky = Math.min(Math.round(Y(s.ask)), by - 1);
  rect(0, ky, ax, 1, '#0c6b3a');
  rect(0, by, ax, 1, '#b8502a');
  s.circles.forEach(p => { o += `<circle cx="${X(p[0])}" cy="${Y(p[1])}" r="4.7" fill="#a9a9a9" opacity=".55"/>`; });
  s.arrows.forEach(a => { o += `<path transform="translate(${X(a[0])} ${Y(a[1])}) scale(1 ${a[2]})" d="M0-6 5.5 0H3V6H-3V0H-5.500Z" fill="${a[3]}"/>`; });
  s.labels.forEach(l => { o += `<text x="${X(l[0])}" y="${Y(l[1]) + 4}" fill="${l[3]}">${l[2]}</text>`; });

  // scale bracket
  const [pt, p1, p2] = s.pips, pm = Y((p1 + p2) / 2);
  o += `<path d="M${ax - 14} ${Math.round(Y(p1)) + .5}H${ax - 9.5}V${Math.round(Y(p2)) + .5}H${ax - 14}" fill="none" stroke="#8b9195"/>`;
  o += `<text class="axis" transform="translate(${ax - 14} ${pm}) rotate(-90)" text-anchor="middle">${pt}</text>`;

  // axes
  o += `<path d="M${ax + .5} 0V${ay + .5}H0" fill="none" stroke="#a9acae" stroke-width="1.500"/>`;
  const [v0, dv, y0, dy, n, skip] = s.y;
  for (let i = 0; i < n; i++) {
    const t = (v0 + dv * i).toFixed(5), y = Y(y0 + dy * i);
    rect(ax + 1, Math.round(y), 2, 1, '#a9acae');
    if (!skip.includes(i)) o += `<text class="axis" x="${ax + 4}" y="${y + 4}">${t.slice(0, 6)}<tspan class="pip" dy="2">${t.slice(6)}</tspan></text>`;
  }
  s.x.forEach(t => {
    const x = X(t[0]);
    if (t[2] !== 0) rect(Math.round(x) - 1, ay + 1, 1, 2, '#a9acae');
    o += `<text class="axis" x="${x}" y="${ay + 13}">${t[1]}</text>`;
  });
  const tag = (y, fill, txt) => {
    o += `<path d="M${ax - 4} ${y}L${ax + 1} ${y - 6.5}H${ax + 39}Q${ax + 41} ${y - 6.5} ${ax + 41} ${y - 4.5}V${y + 5}Q${ax + 41} ${y + 7} ${ax + 39} ${y + 7}H${ax + 1}Z" fill="${fill}"/>`;
    if (txt) o += `<text class="tag" x="${ax + 2}" y="${y + 4}">${txt}</text>`;
  };
  const cad = s.sym === 'GBPCAD';
  if (cad) tag(Math.round(Y(s.askTag)), '#00843c', '1.84111'); else tag(by - 1, '#00843c');
  tag(by, '#f25a22', cad ? '1.84092' : '1.33322');

  // countdown on the time axis
  const nx = Math.round(X(s.now[0])) + s.now[2];
  o += `<path d="M${nx - 17} ${ay - 8.5}H${nx}L${nx + 4} ${ay - 12.5}L${nx + 8} ${ay - 8.5}H${nx + 17}Q${nx + 18.5} ${ay - 8.5} ${nx + 18.5} ${ay - 7}V${ay + 3.5}H${nx - 18.5}V${ay - 7}Q${nx - 18.5} ${ay - 8.5} ${nx - 17} ${ay - 8.5}Z" fill="#152129" stroke="#a9acae"/>`;
  o += `<path d="M${nx - 14.5} ${ay - 6}V${ay + 2}M${nx - 12.5} ${ay - 6}V${ay + 2}" stroke="#777" stroke-dasharray="1 1"/>`;
  o += `<text class="axis" x="${nx - 8}" y="${ay + 2}">${s.now[1]}</text>`;
  svg.innerHTML = o;
}

function strength(chf) {
  const rows = [['JPY: 2.64%', 'up2', 'JPY: 6.97%', 'up2'], ['NZD: 1.71%', 'up2', 'NZD: 2.23%', 'up2'], ['GBP: 0.89%', 'up2', 'GBP: 0.23%', 'up1'], ['EUR: 0.49%', 'up1', `CHF: ${chf}%`, 'down1'], ['CAD: -0.55%', 'down2', 'EUR: -0.49%', 'down1'], ['USD: -1.37%', 'down2', 'AUD: -1.78%', 'down2'], ['CHF: -1.88%', 'down2', 'CAD: -3.21%', 'down2'], ['AUD: -1.93%', 'down2', 'USD: -3.69%', 'down2']];
  return `<section class="strength"><h2>REA_Percentage_V2.0</h2><table><colgroup><col><col></colgroup><thead><tr><th>Daily</th><th>Weekly</th></tr></thead><tbody>${rows.map(r => `<tr><td><span class="chip ${r[1]}">${r[0]}</span></td><td><span class="chip ${r[3]}">${r[2]}</span></td></tr>`).join('')}</tbody></table><p>By: Reavolution.com</p></section>`;
}

const root = document.getElementById('charts');
root.innerHTML = specs.map((s, i) => `<section class="panel">
<div class="panel-head"><i class="grip"></i><span class="badge ${s.badge === 'G' ? 'violet' : ''}">${s.badge}<svg class="corner"><use href="#i-corner"/></svg></span>
<span class="symbol"><select id="sym${i}" aria-label="Symbol"><option>${s.sym}</option></select><svg class="arrow"><use href="#i-down"/></svg></span>
<button class="timeframe" aria-label="Timeframe"><span><span class="name">${s.tf[0]}</span><sub>${s.tf[1]}</sub></span><svg class="arrow"><use href="#i-down"/></svg></button>
<button class="close" aria-label="Close chart"><svg><use href="#i-close"/></svg></button></div>
<div class="chart"><svg class="plot"></svg>
<div class="trade"><button><span>${s.price[0]}<small>${s.price[1]}</small></span><svg><use href="#i-se"/></svg></button><button><svg><use href="#i-se"/></svg><span>${s.price[3] || s.price[0]}<small>${s.price[2]}</small></span></button></div>
<button class="add-bot" aria-label="Add cBot"><svg><use href="#i-robot"/></svg></button>
${s.wide ? strength(s.chf) : ''}${s.edit ? '<button class="edit" aria-label="Edit"><svg viewBox="0 0 14 14"><path d="M8 2.500H1.500V12.500H11.500V6M12.500 1 6 8.500"/><path d="M5 9.500 5.500 7.500 7 9Z"/></svg></button>' : ''}</div>
<div class="scroll"><svg><use href="#i-left"/></svg><span class="thumb" style="width:${s.thumb[0]}px;margin-right:${s.thumb[1]}px"></span><svg><use href="#i-right"/></svg></div>
</section>`).join('');

const draw = () => document.querySelectorAll('.plot').forEach((el, i) => drawChart(el, specs[i]));
draw();
addEventListener('resize', draw);
```
